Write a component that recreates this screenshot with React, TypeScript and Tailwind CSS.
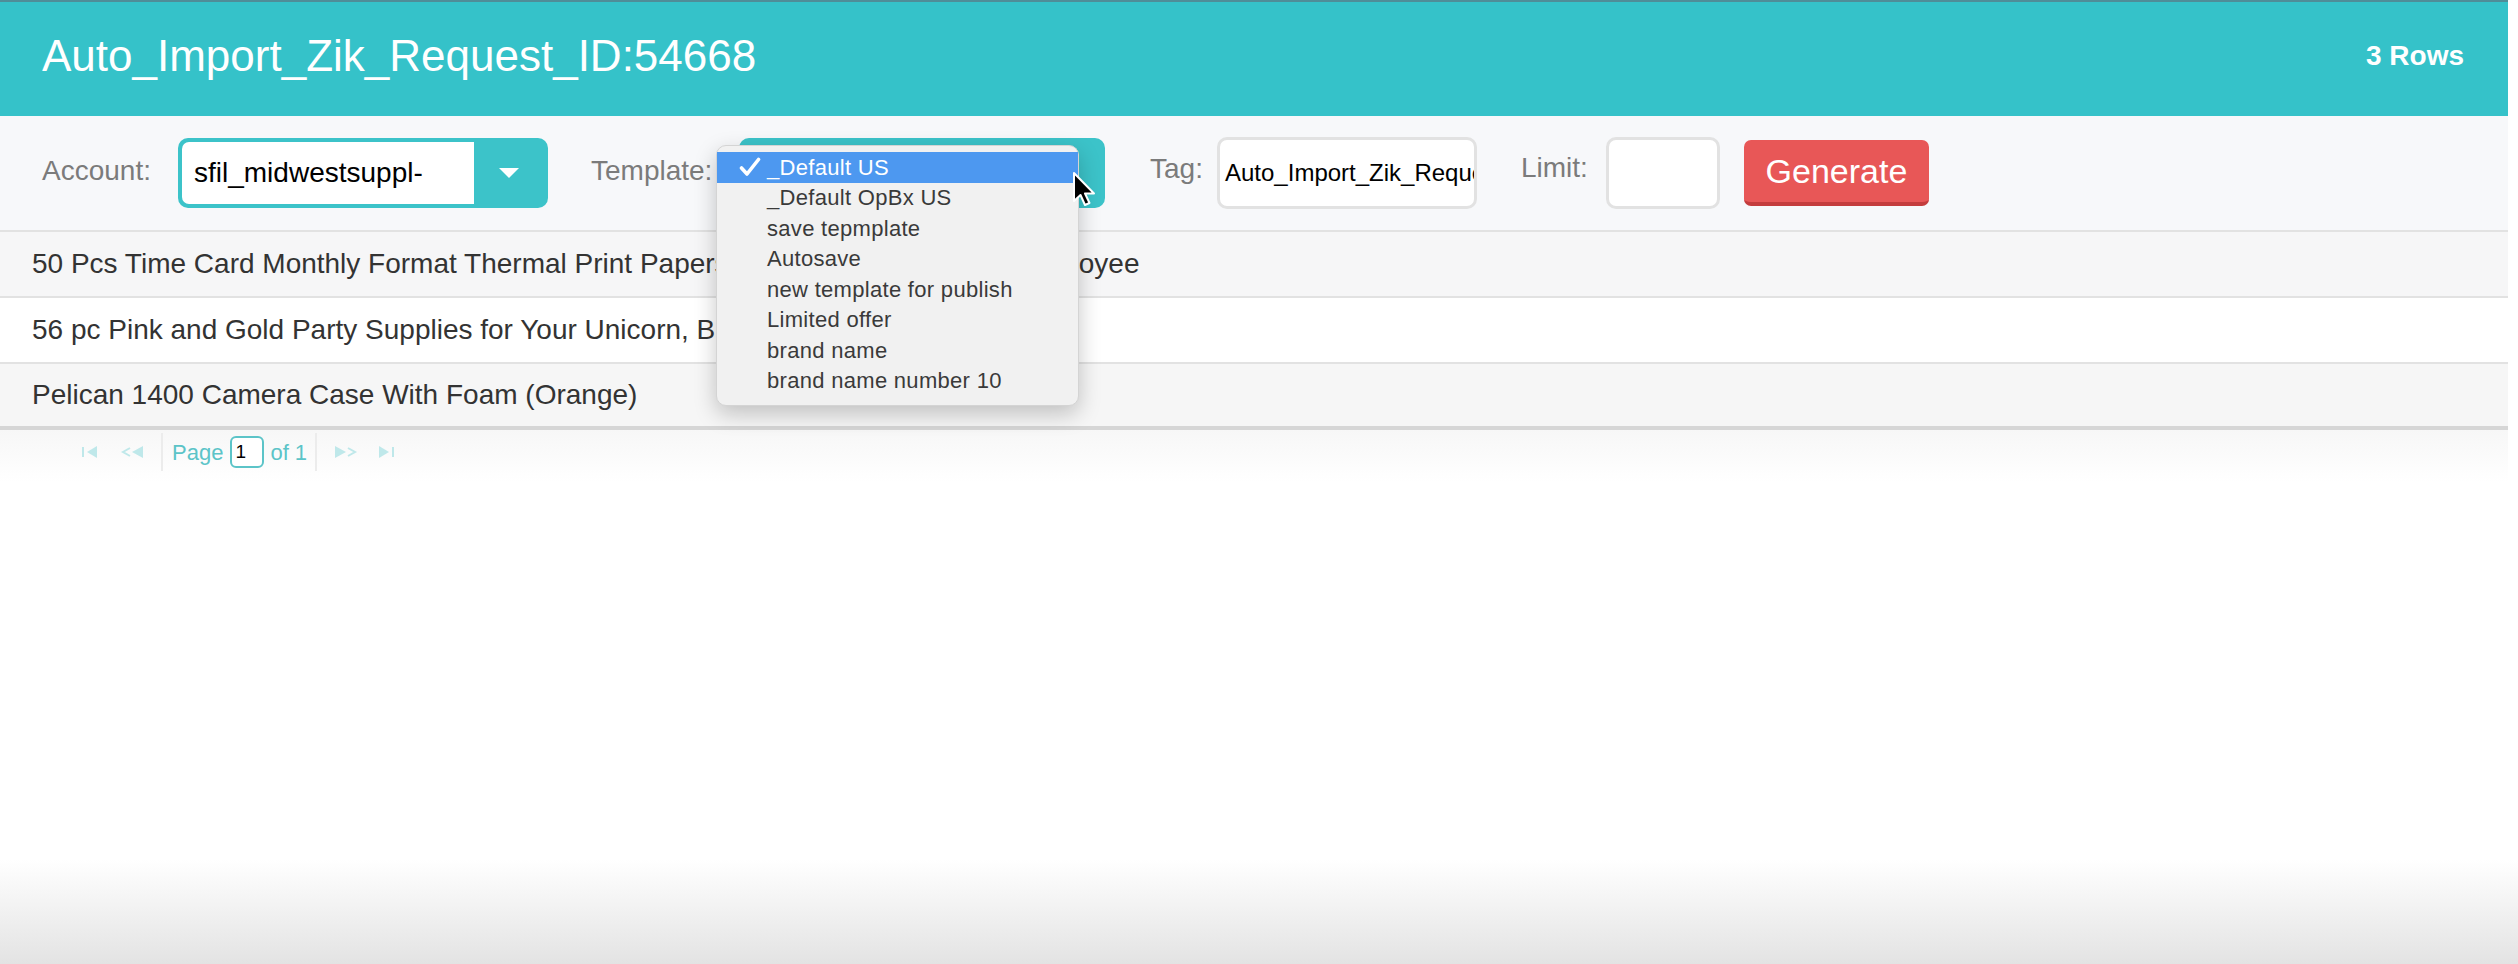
import React from 'react';

const rows = [
  { text: '50 Pcs Time Card Monthly Format Thermal Print Papers, Attendance Cards for Employee', bg: 'bg-[#f6f6f7]' },
  { text: '56 pc Pink and Gold Party Supplies for Your Unicorn, Birthday', bg: 'bg-white' },
  { text: 'Pelican 1400 Camera Case With Foam (Orange)', bg: 'bg-[#f6f6f6]' },
];

const templates = [
  '_Default US',
  '_Default OpBx US',
  'save tepmplate',
  'Autosave',
  'new template for publish',
  'Limited offer',
  'brand name',
  'brand name number 10',
];

function PagerIcon({ kind }: { kind: 'first' | 'prev' | 'next' | 'last' }) {
  const c = '#bfe8ea';
  if (kind === 'first')
    return (
      <svg width="20" height="16" viewBox="0 0 20 16">
        <rect x="2" y="3" width="2" height="10" fill={c} />
        <path d="M17 2 L7 8 L17 14 Z" fill={c} />
      </svg>
    );
  if (kind === 'prev')
    return (
      <svg width="26" height="16" viewBox="0 0 26 16">
        <path d="M10 4 L3 8 L10 12" fill="none" stroke={c} strokeWidth="2" />
        <path d="M23 2 L12 8 L23 14 Z" fill={c} />
      </svg>
    );
  if (kind === 'next')
    return (
      <svg width="26" height="16" viewBox="0 0 26 16">
        <path d="M3 2 L14 8 L3 14 Z" fill={c} />
        <path d="M16 4 L23 8 L16 12" fill="none" stroke={c} strokeWidth="2" />
      </svg>
    );
  return (
    <svg width="20" height="16" viewBox="0 0 20 16">
      <path d="M3 2 L13 8 L3 14 Z" fill={c} />
      <rect x="16" y="3" width="2" height="10" fill={c} />
    </svg>
  );
}

export default function App() {
  return (
    <div className="flex h-screen w-full flex-col bg-white" style={{ fontFamily: '"Liberation Sans", Arial, sans-serif' }}>
      <div className="relative w-[2508px]">
        {/* ── Header ───────────────────────────── */}
        <div className="h-[2px] bg-[#4f8d98]" />
        <div className="flex h-[114px] items-center justify-between bg-[#35c2c9] pb-[6px] pl-[42px] pr-[44px] text-white">
          <h1 className="text-[44px] leading-none">Auto_Import_Zik_Request_ID:54668</h1>
          <span className="text-[28px] font-semibold leading-none">3 Rows</span>
        </div>

        {/* ── Toolbar ──────────────────────────── */}
        <div className="flex h-[114px] items-center bg-[#f7f8fa] pl-[42px] text-[28px]">
          <span className="w-[136px] -translate-y-[2px] text-[#7b7b7b]">Account:</span>
          <div className="flex h-[70px] w-[370px] rounded-[10px] bg-[#3cc3c9] p-[4px]">
            <div className="flex flex-1 items-center rounded-l-[7px] bg-white pl-[12px] text-black">sfil_midwestsuppl-</div>
            <div className="flex w-[70px] items-center justify-center">
              <svg width="22" height="12" viewBox="0 0 22 12">
                <path d="M1 1 L21 1 L11 11 Z" fill="white" />
              </svg>
            </div>
          </div>

          <span className="ml-[43px] w-[148px] -translate-y-[2px] text-[#7b7b7b]">Template:</span>
          <div className="h-[70px] w-[366px] rounded-[10px] bg-[#3cc3c9]" />

          <span className="ml-[45px] w-[67px] -translate-y-[4px] text-[#7b7b7b]">Tag:</span>
          <div className="flex h-[72px] w-[260px] items-center overflow-hidden whitespace-nowrap rounded-[10px] border-[3px] border-[#e2e2e2] bg-white pl-[5px] text-[24px] text-black">
            Auto_Import_Zik_Request_ID:54668
          </div>

          <span className="ml-[44px] w-[85px] -translate-y-[5px] text-[#7b7b7b]">Limit:</span>
          <div className="h-[72px] w-[114px] rounded-[10px] border-[3px] border-[#e2e2e2] bg-white" />

          <button className="ml-[24px] flex h-[66px] w-[185px] items-center justify-center rounded-[7px] border-b-[4px] border-[#c43d3d] bg-[#e85757] text-[34px] text-white">
            Generate
          </button>
        </div>

        {/* ── Rows ─────────────────────────────── */}
        <div className="border-t-2 border-[#e2e2e2]">
          {rows.map((r, i) => (
            <div
              key={i}
              className={`flex h-[66px] items-center whitespace-nowrap pl-[32px] text-[28px] text-[#333] ${r.bg} ${
                i === rows.length - 1 ? 'border-b-4 border-[#d6d6d6]' : 'border-b-2 border-[#e2e2e2]'
              }`}
            >
              {r.text}
            </div>
          ))}
        </div>

        {/* ── Pager ────────────────────────────── */}
        <div className="flex h-[52px] items-center bg-linear-to-b from-[#f7f7f7] to-white pb-[8px] pl-[80px] text-[22px] text-[#5cc4c8]">
          <PagerIcon kind="first" />
          <span className="ml-[20px]">
            <PagerIcon kind="prev" />
          </span>
          <div className="ml-[15px] h-[38px] w-[2px] bg-[#ececec]" />
          <span className="ml-[9px]">Page</span>
          <div className="ml-[7px] flex h-[32px] w-[34px] items-center rounded-[6px] border-2 border-[#5cc4c8] bg-white pl-[3px] text-[19px] text-black">
            1
          </div>
          <span className="ml-[6px]">of 1</span>
          <div className="ml-[8px] h-[38px] w-[2px] bg-[#ececec]" />
          <span className="ml-[15px]">
            <PagerIcon kind="next" />
          </span>
          <span className="ml-[18px]">
            <PagerIcon kind="last" />
          </span>
        </div>

        {/* ── Template dropdown (open) ─────────── */}
        <div className="absolute left-[716px] top-[145px] w-[363px] rounded-[10px] border border-[#d4d4d4] bg-[#f1f1f1] pb-[9px] pt-[6px] shadow-[0_8px_22px_rgba(0,0,0,0.22)]">
          {templates.map((t, i) => (
            <div
              key={t}
              className={`flex h-[30.5px] items-center text-[22px] tracking-[0.3px] ${
                i === 0 ? 'bg-[#4d98f0] text-white' : 'text-[#3a3a3a]'
              }`}
            >
              <span className="flex w-[50px] justify-end pr-[6px]">
                {i === 0 && (
                  <svg width="22" height="20" viewBox="0 0 22 20">
                    <path d="M2.5 11 L8 17 L19.5 2.5" fill="none" stroke="white" strokeWidth="3.6" strokeLinecap="round" strokeLinejoin="round" />
                  </svg>
                )}
              </span>
              <span>{t}</span>
            </div>
          ))}
        </div>

        {/* ── Mouse cursor ─────────────────────── */}
        <svg className="absolute left-[1072px] top-[171px]" width="26" height="38" viewBox="0 0 26 38">
          <path d="M2 2 L2 30 L8.5 24 L13 34 L17.5 32 L13 22.5 L22 22.5 Z" fill="black" stroke="white" strokeWidth="2" strokeLinejoin="round" />
        </svg>
      </div>

      <div className="flex-1" />
      <div className="h-[104px] w-full bg-linear-to-b from-white to-[#e3e3e3]" />
    </div>
  );
}
